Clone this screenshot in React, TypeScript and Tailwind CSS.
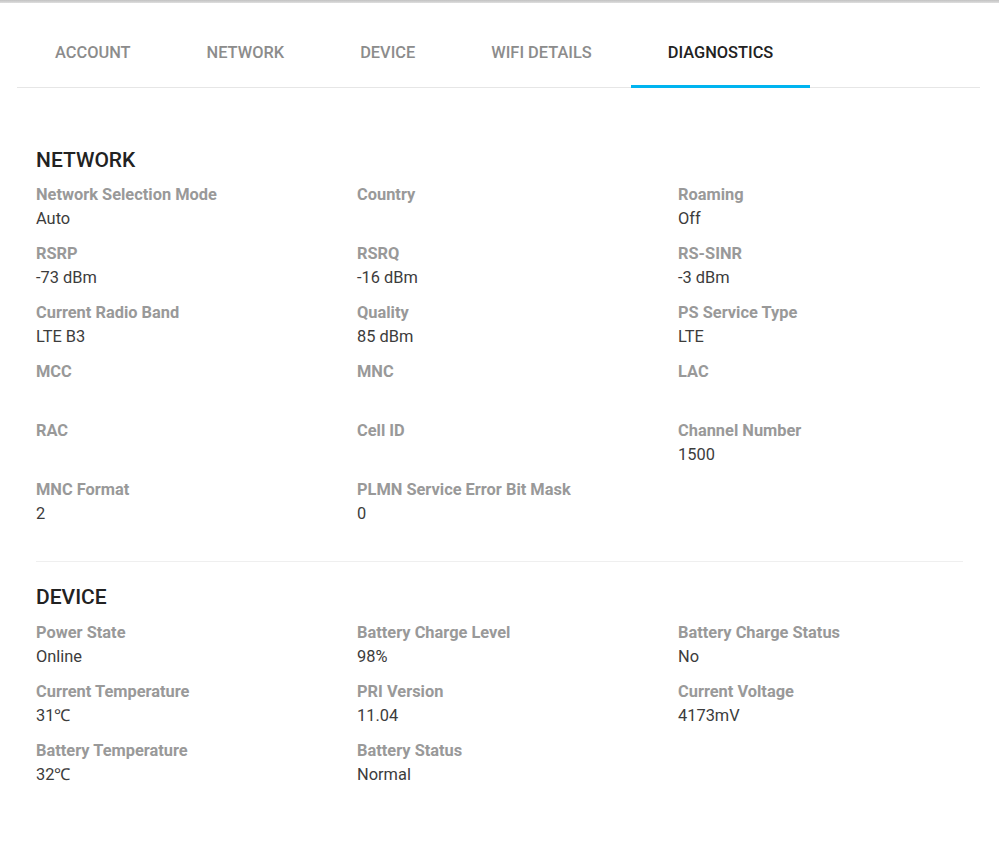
import React from "react";

type Field = { label: string; value?: string };

const tabs = ["ACCOUNT", "NETWORK", "DEVICE", "WIFI DETAILS", "DIAGNOSTICS"];

const network: Field[] = [
  { label: "Network Selection Mode", value: "Auto" },
  { label: "Country" },
  { label: "Roaming", value: "Off" },
  { label: "RSRP", value: "-73 dBm" },
  { label: "RSRQ", value: "-16 dBm" },
  { label: "RS-SINR", value: "-3 dBm" },
  { label: "Current Radio Band", value: "LTE B3" },
  { label: "Quality", value: "85 dBm" },
  { label: "PS Service Type", value: "LTE" },
  { label: "MCC" },
  { label: "MNC" },
  { label: "LAC" },
  { label: "RAC" },
  { label: "Cell ID" },
  { label: "Channel Number", value: "1500" },
  { label: "MNC Format", value: "2" },
  { label: "PLMN Service Error Bit Mask", value: "0" },
];

const device: Field[] = [
  { label: "Power State", value: "Online" },
  { label: "Battery Charge Level", value: "98%" },
  { label: "Battery Charge Status", value: "No" },
  { label: "Current Temperature", value: "31℃" },
  { label: "PRI Version", value: "11.04" },
  { label: "Current Voltage", value: "4173mV" },
  { label: "Battery Temperature", value: "32℃" },
  { label: "Battery Status", value: "Normal" },
];

function Section({ title, fields, gap }: { title: string; fields: Field[]; gap: string }) {
  return (
    <div>
      <h2 className="text-[21px] leading-[28px] font-medium text-[#222]">{title}</h2>
      <div className={`${gap} grid grid-cols-3 gap-x-[36px] gap-y-[11px]`}>
        {fields.map((f) => (
          <div key={f.label}>
            <div className="text-[16.4px] leading-[24px] font-bold text-[#999]">{f.label}</div>
            <div className="text-[16.4px] leading-[24px] min-h-[24px] text-[#3c3c3c]">{f.value ?? ""}</div>
          </div>
        ))}
      </div>
    </div>
  );
}

export default function App() {
  return (
    <div className="min-h-[854px] bg-white" style={{ fontFamily: "Roboto, 'Liberation Sans', sans-serif" }}>
      <div className="h-[3px] bg-gradient-to-b from-[#c2c2c2] to-[#dedede]" />
      <div className="mt-[14px] ml-[17px] w-[963px] flex border-b border-[#e6e6e6]">
        {tabs.map((t) => {
          const active = t === "DIAGNOSTICS";
          return (
            <div
              key={t}
              className={`relative h-[70px] pt-[2px] px-[38px] flex items-center text-[16.4px] font-medium ${
                active ? "text-[#222]" : "text-[#8c8c8c]"
              }`}
            >
              {t}
              {active && <div className="absolute left-[1px] right-[1px] bottom-[-1px] h-[3px] bg-[#00b4f0]" />}
            </div>
          );
        })}
      </div>
      <div className="px-[36px] pt-[58px]">
        <Section title="NETWORK" fields={network} gap="mt-[9px]" />
        <div className="mt-[35px] border-t border-[#efefef]" />
        <div className="pt-[21px]">
          <Section title="DEVICE" fields={device} gap="mt-[10px]" />
        </div>
      </div>
    </div>
  );
}
